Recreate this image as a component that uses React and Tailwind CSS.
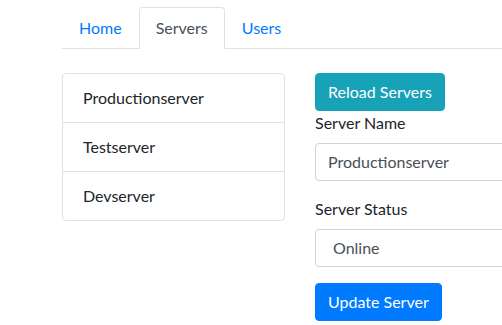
export default function App() {
  const font = { fontFamily: '"Segoe UI", Lato, "Open Sans", sans-serif' };
  return (
    <div className="w-[502px] h-[325px] overflow-hidden bg-white text-[#212529] text-[16px] leading-[24px]" style={font}>
      <div className="pl-[62px] pt-[7px]">
        <div className="flex border-b border-[#dee2e6] w-[800px]">
          <a className="block px-4 py-2 text-[#007bff] border border-transparent rounded-t mb-[-1px]">Home</a>
          <a className="block px-4 py-2 text-[#495057] bg-white border border-[#dee2e6] border-b-white rounded-t mb-[-1px]">Servers</a>
          <a className="block px-4 py-2 text-[#007bff] border border-transparent rounded-t mb-[-1px]">Users</a>
        </div>
        <div className="flex items-start gap-[30px] mt-[24px]">
          <div className="w-[223px] shrink-0 border border-[#dee2e6] rounded flex flex-col">
            <div className="px-5 py-3">Productionserver</div>
            <div className="px-5 py-3 border-t border-[#dee2e6]">Testserver</div>
            <div className="px-5 py-3 border-t border-[#dee2e6]">Devserver</div>
          </div>
          <div className="w-[476px] shrink-0 flex flex-col items-start">
            <button className="bg-[#17a2b8] text-white px-3 py-[6px] rounded border border-[#17a2b8]">Reload Servers</button>
            <label className="block mb-2">Server Name</label>
            <div className="w-full h-[38px] border border-[#ced4da] rounded px-3 py-[6px] text-[#495057] mb-4">Productionserver</div>
            <label className="block mb-2">Server Status</label>
            <div className="w-full h-[38px] border border-[#ced4da] rounded pl-[17px] pr-3 py-[6px] text-[#495057] mb-4">Online</div>
            <button className="bg-[#007bff] text-white px-3 py-[6px] rounded border border-[#007bff]">Update Server</button>
          </div>
        </div>
      </div>
    </div>
  );
}
